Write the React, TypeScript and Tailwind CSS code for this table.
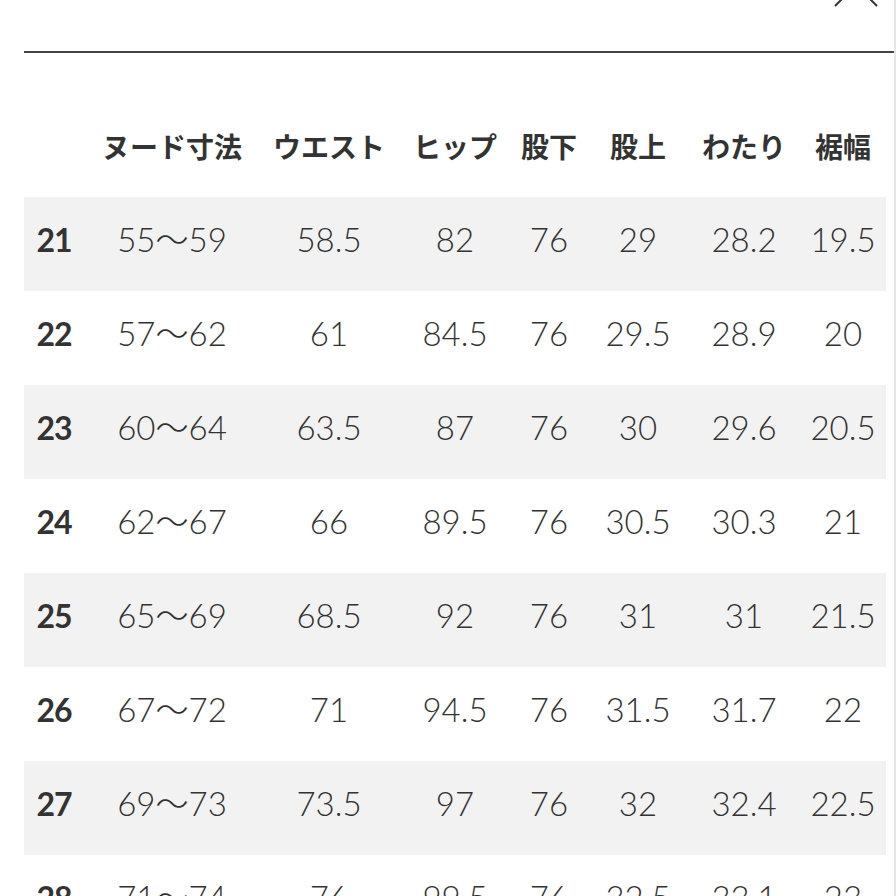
import React from "react";

const rows = [
  ["21", "55～59", "58.5", "82", "76", "29", "28.2", "19.5"],
  ["22", "57～62", "61", "84.5", "76", "29.5", "28.9", "20"],
  ["23", "60～64", "63.5", "87", "76", "30", "29.6", "20.5"],
  ["24", "62～67", "66", "89.5", "76", "30.5", "30.3", "21"],
  ["25", "65～69", "68.5", "92", "76", "31", "31", "21.5"],
  ["26", "67～72", "71", "94.5", "76", "31.5", "31.7", "22"],
  ["27", "69～73", "73.5", "97", "76", "32", "32.4", "22.5"],
  ["28", "71～74", "76", "99.5", "76", "32.5", "33.1", "23"],
];

const headers = ["", "ヌード寸法", "ウエスト", "ヒップ", "股下", "股上", "わたり", "裾幅"];

const cols = "grid grid-cols-[60px_176px_138px_114px_74px_104px_108px_90px]";

export default function App() {
  return (
    <div className="w-[896px] h-[896px] overflow-hidden bg-white text-[#333] border-r-2 border-[#e6e6e6]">
      <div className="h-[51px] flex justify-end overflow-hidden pr-[13px]">
        <svg width="50" height="50" viewBox="0 0 50 50" className="-mt-[40px]">
          <path d="M4 4 L46 46 M46 4 L4 46" stroke="#333" strokeWidth="2" fill="none" />
        </svg>
      </div>
      <div className="ml-[24px] h-[2px] bg-[#444]" />
      <div className="ml-[24px] w-[862px] mt-[48px]">
        <div
          className={`${cols} h-[96px] pb-[6px] items-center text-center font-bold text-[28px]`}
          style={{ fontFamily: '"Noto Sans CJK JP", sans-serif' }}
        >
          {headers.map((h, i) => (
            <div key={i} className="whitespace-nowrap">
              {h}
            </div>
          ))}
        </div>
        {rows.map((r, ri) => (
          <div
            key={r[0]}
            className={`${cols} h-[94px] pb-[9px] items-center text-center ${ri % 2 === 0 ? "bg-[#f2f2f2]" : "bg-white"}`}
            style={{ fontFamily: 'Lato, "Noto Sans CJK JP", sans-serif' }}
          >
            {r.map((c, ci) => (
              <div
                key={ci}
                className={ci === 0 ? "font-bold text-[32px] tracking-[-1px]" : "font-light text-[33px] whitespace-nowrap"}
              >
                {c}
              </div>
            ))}
          </div>
        ))}
      </div>
    </div>
  );
}
